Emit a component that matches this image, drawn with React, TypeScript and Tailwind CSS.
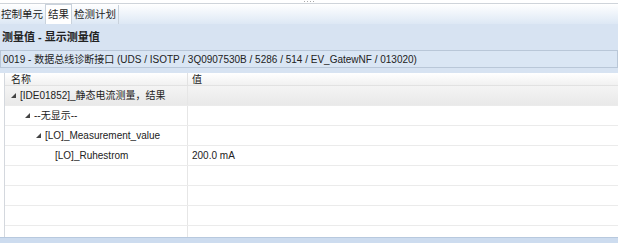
import React from 'react';

const font = { fontFamily: '"Liberation Sans", "Noto Sans CJK SC", sans-serif' };

const Arrow: React.FC = () => (
  <svg width="5" height="5" viewBox="0 0 5 5" className="shrink-0">
    <polygon points="5,0 5,5 0,5" fill="#444" />
  </svg>
);

interface Row {
  name: string;
  value?: string;
  indent: number;
  expanded?: boolean;
  shaded?: boolean;
}

const rows: Row[] = [
  { name: '[IDE01852]_静态电流测量，结果', indent: 0, expanded: true, shaded: true },
  { name: '--无显示--', indent: 1, expanded: true },
  { name: '[LO]_Measurement_value', indent: 2, expanded: true },
  { name: '[LO]_Ruhestrom', value: '200.0 mA', indent: 3 },
  { name: '', indent: 0 },
  { name: '', indent: 0 },
  { name: '', indent: 0 },
];

const indents = ['pl-[6px]', 'pl-[20px]', 'pl-[31px]', 'pl-[50px]'];

export default function App() {
  return (
    <div className="w-[624px] h-[243px] bg-white overflow-hidden text-[#222]" style={font}>
      <div className="w-[618px] h-full flex flex-col">
        {/* top grip strip */}
        <div className="h-[4px] border-b border-[#cfd4da] flex justify-center items-start gap-[2px] pt-[1px]">
          <div className="w-[1px] h-[1px] bg-[#aaa]" />
          <div className="w-[1px] h-[1px] bg-[#aaa]" />
          <div className="w-[1px] h-[1px] bg-[#aaa]" />
          <div className="w-[1px] h-[1px] bg-[#aaa]" />
        </div>

        {/* tabs */}
        <div className="h-[20px] flex items-end bg-gradient-to-b from-white to-[#dde8f5] text-[10.5px]">
          <div className="h-[19px] px-[1px] flex items-center">控制单元</div>
          <div className="h-[20px] ml-[1px] px-[2px] flex items-center bg-white border border-b-0 border-[#c9d2dc]">结果</div>
          <div className="h-[19px] px-[2px] flex items-center border-r border-[#c9d2dc]">检测计划</div>
        </div>

        {/* header panel */}
        <div className="bg-[#d7e3f2] pb-[5px]">
          <div className="h-[26px] pl-[2px] flex items-center font-bold text-[11px]">测量值 - 显示测量值</div>
          <div className="h-[18px] border border-[#b9c7d8] bg-[#dae6f4] flex items-center pl-[2px] text-[10px] whitespace-nowrap">
            0019 - 数据总线诊断接口 (UDS / ISOTP / 3Q0907530B / 5286 / 514 / EV_GatewNF / 013020)
          </div>
        </div>

        {/* table */}
        <div className="flex-1 ml-[4px] border-l border-[#d4d8de] flex flex-col text-[10px]">
          <div className="h-[13px] flex bg-gradient-to-b from-white to-[#f1f1f1] border-b border-[#e2e2e2]">
            <div className="w-[183px] pl-[6px] flex items-center border-r border-[#e2e2e2]">名称</div>
            <div className="flex-1 pl-[4px] flex items-center">值</div>
          </div>
          {rows.map((r, i) => (
            <div
              key={i}
              className={`h-[20px] shrink-0 flex border-b border-[#ebebeb] ${r.shaded ? 'bg-gradient-to-b from-[#f4f4f4] to-[#e9e9e9]' : ''}`}
            >
              <div className={`w-[183px] flex items-center gap-[4px] border-r border-[#e6e6e6] whitespace-nowrap ${indents[r.indent]}`}>
                {r.expanded && <Arrow />}
                <span>{r.name}</span>
              </div>
              <div className="flex-1 pl-[4px] flex items-center">{r.value}</div>
            </div>
          ))}
          <div className="flex-1 flex">
            <div className="w-[183px] border-r border-[#e6e6e6]" />
          </div>
        </div>
        <div className="h-[6px] bg-[#cddcef] border-t border-[#b8c9de]" />
      </div>
    </div>
  );
}
